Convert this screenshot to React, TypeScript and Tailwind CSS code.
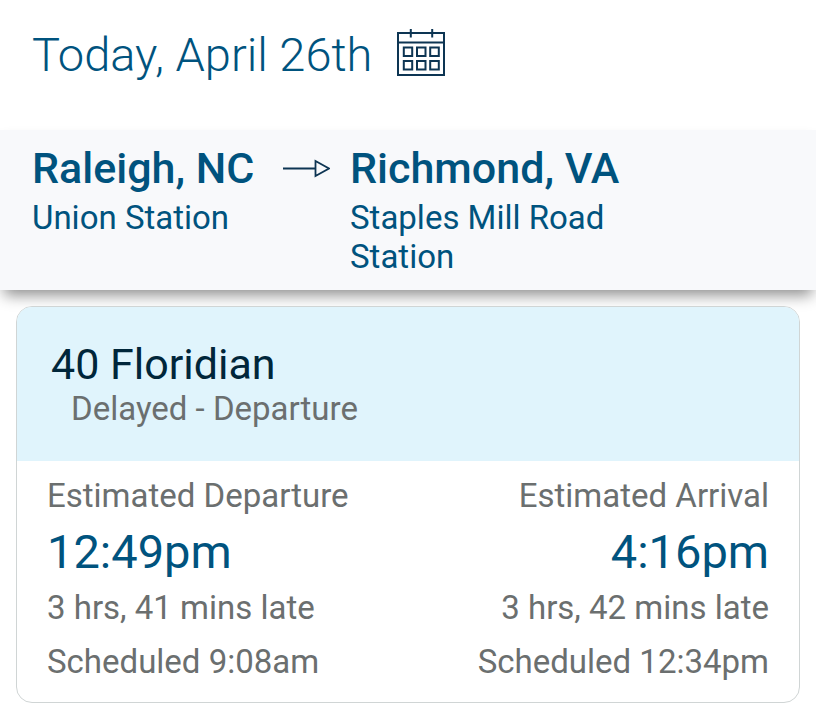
import { useState } from "react";

type StopProps = {
  city: string;
  station: string;
};

type TimeProps = {
  label: string;
  time: string;
  late: string;
  scheduled: string;
  alignRight?: boolean;
};

const CalendarIcon = () => (
  <svg
    className="h-12 w-12"
    viewBox="0 0 48 48"
    fill="none"
    stroke="currentColor"
    strokeWidth="2"
    aria-hidden="true"
  >
    <path d="M1 5h46v42H1zM1 14.5h46" />
    <path d="M13.8 1v8.5M35.2 1v8.5" />
    <path d="M6.8 19.6h8.4V28H6.8zM20 19.6h8.5V28H20zM33.2 19.6h8.6V28h-8.6zM6.8 33h8.4v8.4H6.8zM20 33h8.5v8.4H20zM33.2 33h8.6v8.4h-8.6z" />
  </svg>
);

const ArrowIcon = () => (
  <svg
    className="h-5 w-12 shrink-0"
    viewBox="0 0 48 20"
    fill="none"
    stroke="currentColor"
    strokeWidth="1.8"
    aria-hidden="true"
  >
    <path d="M1 10.5h32.5M33.5 3v15L47 10.5z" />
  </svg>
);

const Stop = ({ city, station }: StopProps) => (
  <div>
    <h2 className="text-[43px] leading-12 font-medium whitespace-nowrap">{city}</h2>
    <p className="mt-1.5 text-[33px] leading-[39px]">{station}</p>
  </div>
);

const TimeColumn = ({ label, time, late, scheduled, alignRight }: TimeProps) => (
  <div className={alignRight ? "text-right" : "text-left"}>
    <p className="text-[33px] leading-10">{label}</p>
    <p className="my-2 text-[47px] leading-14 text-[#00537e]">{time}</p>
    <p className="text-[33px] leading-10">{late}</p>
    <p className="mt-3.5 text-[33px] leading-10">{scheduled}</p>
  </div>
);

const App = () => {
  const [picked, setPicked] = useState(false);

  return (
    <main className="min-h-screen bg-white font-['Roboto',sans-serif] text-[#00537e]">
      <header className="flex items-start gap-[25px] px-8 pt-7 pb-12">
        <h1 className="text-[47px] leading-[54px] font-light">Today, April 26th</h1>
        <button
          type="button"
          aria-label="Choose date"
          aria-pressed={picked}
          className="text-[#0d3553]"
          onClick={() => setPicked(!picked)}
        >
          <CalendarIcon />
        </button>
      </header>

      <section className="grid grid-cols-[250px_68px_280px] bg-[#f8f9fb] px-8 pt-3.5 pb-3.5 shadow-[0_9px_14px_-4px_rgba(0,0,0,0.45)]">
        <Stop city="Raleigh, NC" station="Union Station" />
        <div className="pt-3.5 text-[#0d3553]">
          <ArrowIcon />
        </div>
        <Stop city="Richmond, VA" station="Staples Mill Road Station" />
      </section>

      <article className="m-4 overflow-hidden rounded-2xl border border-[#d0d5d5] bg-white text-[#6b6f6f]">
        <header className="bg-[#e0f4fc] px-[34px] pt-8 pb-8">
          <h2 className="text-[43px] leading-[50px] text-[#00263a]">40 Floridian</h2>
          <p className="pl-5 text-[33px] leading-10">Delayed - Departure</p>
        </header>
        <div className="flex justify-between px-[30px] pt-[15px] pb-5">
          <TimeColumn
            label="Estimated Departure"
            time="12:49pm"
            late="3 hrs, 41 mins late"
            scheduled="Scheduled 9:08am"
          />
          <TimeColumn
            label="Estimated Arrival"
            time="4:16pm"
            late="3 hrs, 42 mins late"
            scheduled="Scheduled 12:34pm"
            alignRight
          />
        </div>
      </article>
    </main>
  );
};

export default App;
